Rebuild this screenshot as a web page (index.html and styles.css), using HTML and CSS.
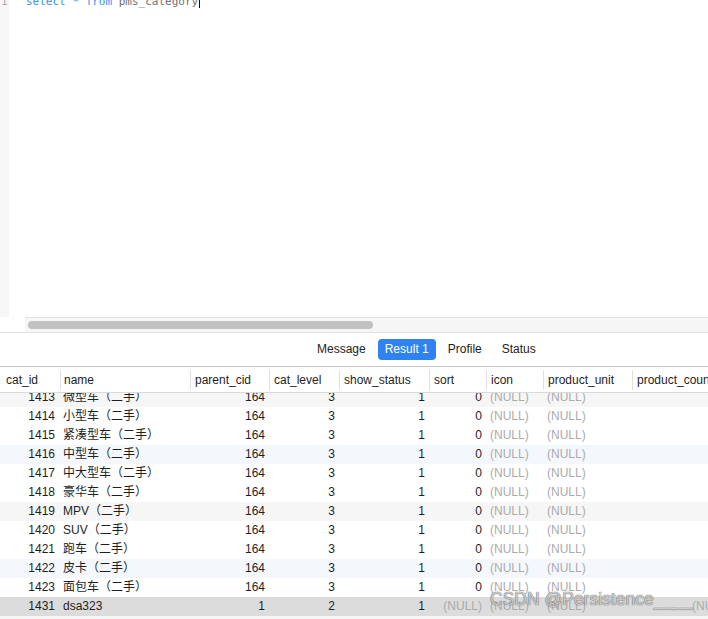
FILE: index.html
```html
<!DOCTYPE html>
<html>
<head>
<meta charset="utf-8">
<link rel="stylesheet" href="styles.css">
</head>
<body>
<div class="app">
  <div class="editor">
    <div class="gutter"><span class="ln">1</span></div>
    <div class="code-area">
      <div class="code"><span class="kw">select</span> <span class="kw">*</span> <span class="kw">from</span> <span class="id">pms_category</span><span class="caret"></span></div>
      <div class="hscroll"><div class="thumb"></div></div>
    </div>
  </div>
  <div class="tabs">
    <span class="tab">Message</span>
    <span class="tab active">Result 1</span>
    <span class="tab">Profile</span>
    <span class="tab">Status</span>
  </div>
  <div class="grid head">
    <div class="hc first">cat_id</div>
    <div class="hc">name</div>
    <div class="hc">parent_cid</div>
    <div class="hc">cat_level</div>
    <div class="hc">show_status</div>
    <div class="hc">sort</div>
    <div class="hc">icon</div>
    <div class="hc">product_unit</div>
    <div class="hc">product_count</div>
  </div>
  <div class="rows">
    <div class="rows-inner">
      <div class="grid row stripe-g"><div class="c r">1413</div><div class="c l">微型车（二手）</div><div class="c r">164</div><div class="c r">3</div><div class="c r">1</div><div class="c r">0</div><div class="c l null">(NULL)</div><div class="c l null">(NULL)</div><div class="c"></div></div>
      <div class="grid row"><div class="c r">1414</div><div class="c l">小型车（二手）</div><div class="c r">164</div><div class="c r">3</div><div class="c r">1</div><div class="c r">0</div><div class="c l null">(NULL)</div><div class="c l null">(NULL)</div><div class="c"></div></div>
      <div class="grid row"><div class="c r">1415</div><div class="c l">紧凑型车（二手）</div><div class="c r">164</div><div class="c r">3</div><div class="c r">1</div><div class="c r">0</div><div class="c l null">(NULL)</div><div class="c l null">(NULL)</div><div class="c"></div></div>
      <div class="grid row stripe-b"><div class="c r">1416</div><div class="c l">中型车（二手）</div><div class="c r">164</div><div class="c r">3</div><div class="c r">1</div><div class="c r">0</div><div class="c l null">(NULL)</div><div class="c l null">(NULL)</div><div class="c"></div></div>
      <div class="grid row"><div class="c r">1417</div><div class="c l">中大型车（二手）</div><div class="c r">164</div><div class="c r">3</div><div class="c r">1</div><div class="c r">0</div><div class="c l null">(NULL)</div><div class="c l null">(NULL)</div><div class="c"></div></div>
      <div class="grid row"><div class="c r">1418</div><div class="c l">豪华车（二手）</div><div class="c r">164</div><div class="c r">3</div><div class="c r">1</div><div class="c r">0</div><div class="c l null">(NULL)</div><div class="c l null">(NULL)</div><div class="c"></div></div>
      <div class="grid row stripe-g"><div class="c r">1419</div><div class="c l">MPV（二手）</div><div class="c r">164</div><div class="c r">3</div><div class="c r">1</div><div class="c r">0</div><div class="c l null">(NULL)</div><div class="c l null">(NULL)</div><div class="c"></div></div>
      <div class="grid row"><div class="c r">1420</div><div class="c l">SUV（二手）</div><div class="c r">164</div><div class="c r">3</div><div class="c r">1</div><div class="c r">0</div><div class="c l null">(NULL)</div><div class="c l null">(NULL)</div><div class="c"></div></div>
      <div class="grid row"><div class="c r">1421</div><div class="c l">跑车（二手）</div><div class="c r">164</div><div class="c r">3</div><div class="c r">1</div><div class="c r">0</div><div class="c l null">(NULL)</div><div class="c l null">(NULL)</div><div class="c"></div></div>
      <div class="grid row stripe-b"><div class="c r">1422</div><div class="c l">皮卡（二手）</div><div class="c r">164</div><div class="c r">3</div><div class="c r">1</div><div class="c r">0</div><div class="c l null">(NULL)</div><div class="c l null">(NULL)</div><div class="c"></div></div>
      <div class="grid row"><div class="c r">1423</div><div class="c l">面包车（二手）</div><div class="c r">164</div><div class="c r">3</div><div class="c r">1</div><div class="c r">0</div><div class="c l null">(NULL)</div><div class="c l null">(NULL)</div><div class="c"></div></div>
      <div class="grid row selected"><div class="c r">1431</div><div class="c l">dsa323</div><div class="c r">1</div><div class="c r">2</div><div class="c r">1</div><div class="c r null">(NULL)</div><div class="c l null">(NULL)</div><div class="c l null">(NULL)</div><div class="c null nc">(NULL)</div></div>
      <div class="grid row stripe-g"></div>
    </div>
  </div>
  <div class="watermark">CSDN @Persistence____</div>
</div>
</body>
</html>
```
FILE: styles.css
```css
* { box-sizing: border-box; }
html, body {
  margin: 0;
  padding: 0;
  background: #fff;
}
body {
  font-family: "Liberation Sans", Arial, "Noto Sans CJK SC", sans-serif;
  font-size: 12px;
  color: #1e1e1e;
  overflow: hidden;
}
.app {
  position: relative;
  width: 708px;
  height: 619px;
  display: flex;
  flex-direction: column;
  overflow: hidden;
}

/* editor */
.editor {
  height: 333px;
  display: flex;
  border-bottom: 1px solid #e2e2e2;
  flex: none;
}
.gutter {
  width: 9px;
  height: 317px;
  background: #f7f7f7;
  font-family: "DejaVu Sans Mono", monospace;
  font-size: 11px;
  line-height: 14px;
  color: #a8a8a8;
  padding-left: 1px;
}
.ln {
  display: block;
  margin-top: -5px;
}
.code-area {
  flex: 1;
  display: flex;
  flex-direction: column;
}
.code {
  flex: 1;
  margin-top: -5px;
  padding-left: 17px;
  font-family: "DejaVu Sans Mono", monospace;
  font-size: 11px;
  line-height: 14px;
  color: #777;
  white-space: pre;
}
.kw { color: #3b8fe8; }
.id { color: #6f6f6f; }
.caret {
  display: inline-block;
  width: 1px;
  height: 12px;
  background: #111;
  vertical-align: -3px;
  margin-left: 1px;
}
.hscroll {
  height: 15px;
  margin-left: 16px;
  border-top: 1px solid #e4e4e4;
  background: #f6f6f6;
  padding: 3px 0 0 3px;
}
.thumb {
  width: 345px;
  height: 8px;
  border-radius: 4px;
  background: #c1c1c1;
}

/* tabs */
.tabs {
  height: 34px;
  flex: none;
  display: flex;
  align-items: center;
  gap: 4px;
  padding-left: 309px;
  border-bottom: 1px solid #cacaca;
  padding-bottom: 1px;
}
.tab {
  height: 21px;
  line-height: 21px;
  padding: 0 8px;
  color: #222;
  border-radius: 4px;
}
.tab.active {
  background: #2f83f0;
  color: #fff;
  padding: 0 7px;
}

/* grid */
.grid {
  display: grid;
  grid-template-columns: 60px 130px 79px 70px 90px 57px 57px 89px 100px;
}
.head {
  height: 26px;
  flex: none;
  border-bottom: 1px solid #dadada;
  align-items: center;
  background: #fff;
  position: relative;
  z-index: 1;
}
.hc {
  height: 20px;
  line-height: 20px;
  padding-left: 4px;
  border-left: 1px solid #e0e0e0;
  white-space: nowrap;
  overflow: hidden;
}
.hc.first {
  border-left: none;
  padding-left: 6px;
}
.hc:nth-child(2) { padding-left: 3px; }

.rows {
  flex: 1;
  overflow: hidden;
}
.rows-inner {
  margin-top: -5px;
}
.row {
  height: 19px;
  line-height: 19px;
}
.c {
  white-space: nowrap;
  overflow: hidden;
}
.c.r {
  text-align: right;
  padding-right: 4px;
}
.row .c:first-child { padding-right: 5px; }
.c.l {
  padding-left: 3px;
}
.c.l.null { padding-left: 4px; }
.null { color: #ababab; }
.c.nc { padding-left: 60px; }
.stripe-g { background: #f6f6f6; }
.stripe-b { background: #f4f8fd; }
.selected { background: #dcdcdc; }

/* watermark overlay */
.watermark {
  position: absolute;
  left: 490px;
  top: 589px;
  font-family: "Liberation Sans", Arial, sans-serif;
  font-size: 17.5px;
  line-height: 20px;
  color: rgba(255, 255, 255, 0.7);
  text-shadow: 0 0 1px rgba(60, 60, 60, 0.9), 0 0 1px rgba(60, 60, 60, 0.6);
  white-space: nowrap;
}
```
